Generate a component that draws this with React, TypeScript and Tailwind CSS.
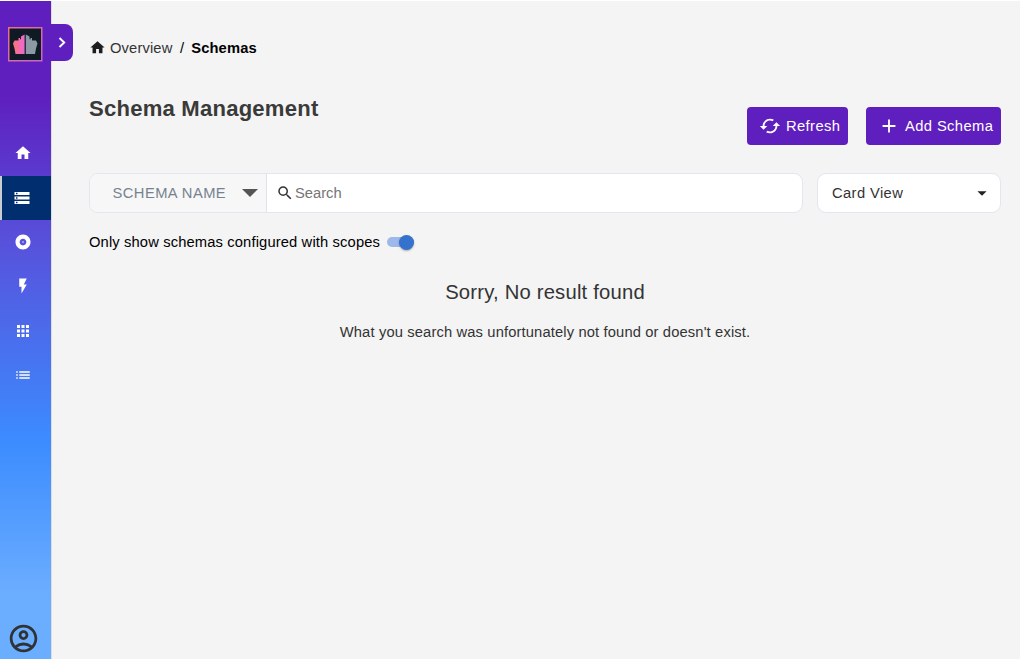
import React from "react";
import {
  MdAdd,
  MdAlbum,
  MdApps,
  MdArrowDropDown,
  MdCached,
  MdFlashOn,
  MdHome,
  MdList,
  MdOutlineAccountCircle,
  MdSearch,
  MdStorage,
} from "react-icons/md";

function Logo() {
  return (
    <svg viewBox="0 0 35 35" className="block h-[35px] w-[35px]">
      <defs>
        <linearGradient id="frame" x1="0" y1="0" x2="1" y2="1">
          <stop offset="0" stopColor="#e8708c" />
          <stop offset="1" stopColor="#c468c8" />
        </linearGradient>
        <linearGradient id="half" x1="0" y1="0" x2="1" y2="0">
          <stop offset="0" stopColor="#ff7272" />
          <stop offset="1" stopColor="#ee68d4" />
        </linearGradient>
      </defs>
      <rect x="0.75" y="0.75" width="33" height="33" fill="#101a24" stroke="url(#frame)" strokeWidth="1.5" />
      <path d="M16.600 7.500V27H7.500L6.500 21.500L5 16.500L6.500 13.500H10.500V11H12V12.500L13 12V9.500Z" fill="url(#half)" />
      <path d="M17.800 7.500V27H27L28 21.500L29.500 16.500L28 13.500H24V11H22.500V12.500L21.500 12V9.500Z" fill="#8b9aa5" />
    </svg>
  );
}

const navigation = [
  { name: "Home", Icon: MdHome },
  { name: "Schemas", Icon: MdStorage, active: true },
  { name: "Scopes", Icon: MdAlbum },
  { name: "Quick config", Icon: MdFlashOn },
  { name: "Applications", Icon: MdApps },
  { name: "Groups", Icon: MdList },
];

function Sidebar() {
  return (
    <aside className="relative flex w-[51px] shrink-0 flex-col bg-[linear-gradient(180deg,#5f1ebe_0%,#5f1ebe_14%,#5752dc_37%,#3c8cff_67%,#6badff_90%,#6badff_100%)]">
      <div className="pt-[26px] pl-2">
        <Logo />
      </div>
      <button
        aria-label="Expand menu"
        className="absolute top-[23px] left-[51px] flex h-[37px] w-[22px] items-center justify-center rounded-r-[8px] bg-[#5f1ebe] text-white"
      >
        <svg viewBox="0 0 8 12" className="h-3 w-2" fill="none" stroke="currentColor" strokeWidth="1.9">
          <path d="M1.500 1L6.200 5.500L1.500 10" />
        </svg>
      </button>
      <nav className="mt-[69px] flex flex-col">
        {navigation.map(({ name, Icon, active }) => (
          <a
            key={name}
            aria-label={name}
            className={
              active
                ? "flex h-[44px] items-center border-l-2 border-[#c8ced4] bg-[#002e6e] pl-[11px] text-white"
                : "flex h-[44.5px] items-center pl-[14px] text-white"
            }
          >
            <Icon className="size-[18px]" />
          </a>
        ))}
      </nav>
      <div className="mt-auto pb-[4px] pl-[7px] text-[#303336]">
        <MdOutlineAccountCircle className="size-[33px]" />
      </div>
    </aside>
  );
}

export default function App() {
  return (
    <div className="flex h-[660px] w-[1020px] overflow-hidden border-y border-white bg-[#f4f4f4] font-['Liberation_Sans',Arial,sans-serif] text-[14.72px] tracking-[0.138px] text-[#333]">
      <Sidebar />
      <main className="flex min-w-0 grow flex-col border-l border-[#dddddf] pr-[19px] pl-[37px]">
        <div className="mt-[36px] flex h-[22px] items-center">
          <MdHome className="-mt-px size-[17px] text-[#1d1d1f]" />
          <span className="ml-[4px]">Overview</span>
          <span className="ml-[7.5px] text-black">/</span>
          <span className="ml-[7px] font-bold text-black">Schemas</span>
        </div>
        <div className="mt-[33px] flex h-[54px] items-start justify-between">
          <h1 className="mt-px text-[22.08px] leading-[32px] font-bold tracking-[0.22px] text-[#3a3a3a]">Schema Management</h1>
          <div className="mt-[15px] flex gap-[18px] tracking-[0.4px] text-white">
            <button className="flex h-[38px] w-[101px] items-center rounded-[4px] bg-[#5f1ebe] pl-[12px]">
              <MdCached className="size-[22px]" />
              <span className="ml-[5px]">Refresh</span>
            </button>
            <button className="flex h-[38px] w-[135px] items-center rounded-[4px] bg-[#5f1ebe] pl-[12px]">
              <MdAdd className="size-[22px]" />
              <span className="ml-[5px] whitespace-nowrap">Add Schema</span>
            </button>
          </div>
        </div>
        <div className="mt-[27px] flex h-[40px] gap-[14px]">
          <div className="flex w-[714px] overflow-hidden rounded-[9px] border border-[#e5e5ef] bg-white">
            <div className="flex w-[177px] items-center border-r border-[#e2e2ea] bg-[#f7f7f7] pl-[22.500px] text-[#76838f]">
              <span className="w-[115px] tracking-[0.44px] whitespace-nowrap">SCHEMA NAME</span>
              <svg viewBox="0 0 16 8" className="ml-[14px] h-[8px] w-[16px]">
                <path d="M0 0H16L8 8Z" fill="#555" />
              </svg>
            </div>
            <div className="flex items-center pl-[9px] text-[#757575]">
              <MdSearch className="size-[18px] text-[#333]" />
              <span className="ml-[1px] tracking-normal">Search</span>
            </div>
          </div>
          <div className="flex w-[184px] items-center justify-between rounded-[9px] border border-[#e5e5ef] bg-white pr-[7px] pl-[14px]">
            <span className="tracking-[0.4px]">Card View</span>
            <MdArrowDropDown className="size-[22px] text-[#222]" />
          </div>
        </div>
        <div className="mt-[18px] flex h-[22px] items-center text-black">
          <span>Only show schemas configured with scopes</span>
          <span className="ml-[7px] flex h-[10px] w-[27px] items-center justify-end rounded-full bg-[#9db9e9]">
            <span className="size-[15px] rounded-full bg-[#3472cd] shadow-[0_1px_2px_rgba(0,0,0,0.3)]" />
          </span>
        </div>
        <section className="flex flex-col items-center text-center">
          <h2 className="mt-[24px] text-[20.24px] leading-[30px] tracking-[0.2px]">Sorry, No result found</h2>
          <p className="mt-[14px] leading-[22px]">What you search was unfortunately not found or doesn't exist.</p>
        </section>
      </main>
    </div>
  );
}
